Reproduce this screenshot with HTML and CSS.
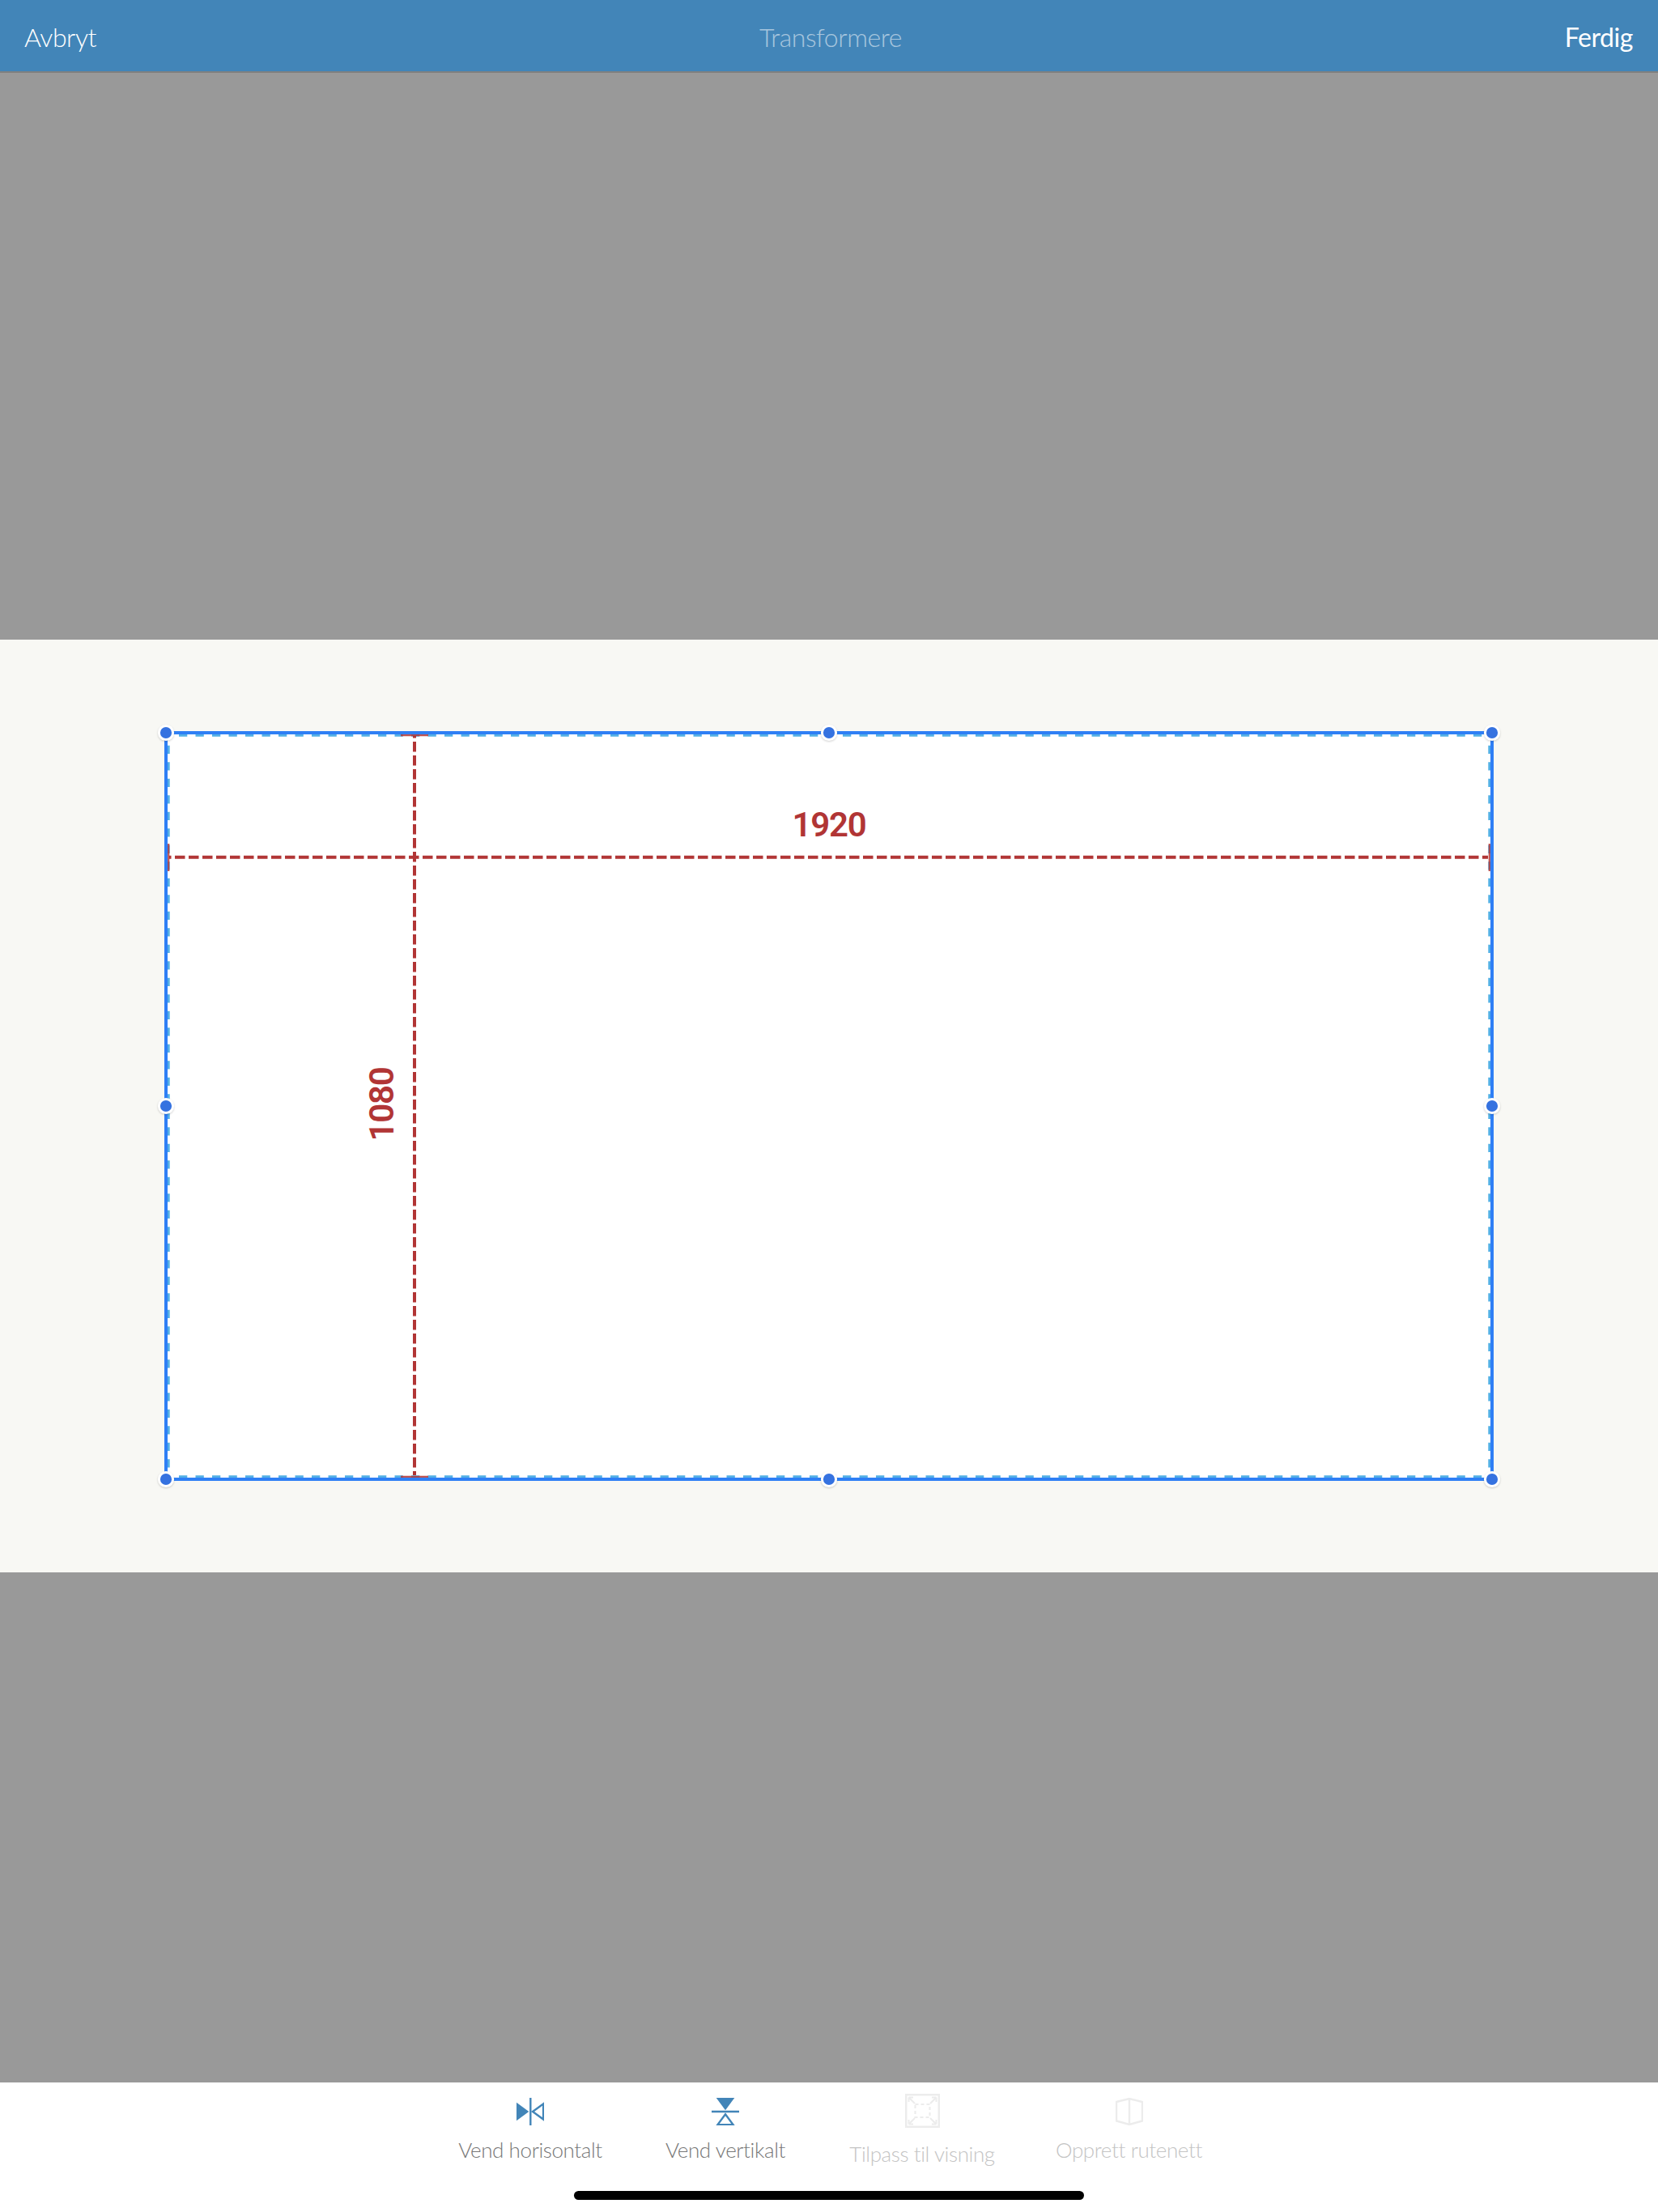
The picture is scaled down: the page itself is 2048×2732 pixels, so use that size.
FILE: index.html
```html
<!DOCTYPE html>
<html lang="no">
<head>
<meta charset="utf-8">
<title>Transformere</title>
<link rel="stylesheet" href="styles.css">
</head>
<body>
<div class="app">
  <header class="topbar">
    <span class="top-action">Avbryt</span>
    <span class="top-title">Transformere</span>
    <span class="top-action top-done">Ferdig</span>
  </header>
  <div class="backdrop backdrop-top"></div>
  <main class="stage">
    <svg class="diagram" viewBox="0 790 2048 1152" width="2048" height="1152" aria-hidden="true">
      <rect class="sheet" x="205" y="905" width="1638" height="922"/>
      <path class="inner-dash dash-h" d="M221 908.2H1838"/>
      <path class="inner-dash dash-h" d="M221 1823.8H1838"/>
      <path class="inner-dash dash-v" d="M208.2 920.7V1822"/>
      <path class="inner-dash dash-v" d="M1839.8 920.7V1822"/>
      <rect class="frame" x="205" y="905" width="1638" height="922"/>
      <path class="red-cap" d="M495 908.2H529M495 1823.8H529M208.2 1042V1076M1839.8 1042V1076"/>
      <path class="red-dash" d="M512 909V1822"/>
      <path class="red-dash" d="M209 1058.7H1838"/>
      <g class="handles">
        <circle cx="205" cy="905" r="8.6"/>
        <circle cx="1024" cy="905" r="8.6"/>
        <circle cx="1843" cy="905" r="8.6"/>
        <circle cx="205" cy="1366" r="8.6"/>
        <circle cx="1843" cy="1366" r="8.6"/>
        <circle cx="205" cy="1827" r="8.6"/>
        <circle cx="1024" cy="1827" r="8.6"/>
        <circle cx="1843" cy="1827" r="8.6"/>
      </g>
    </svg>
    <span class="dim dim-width">1920</span>
    <span class="dim dim-height">1080</span>
  </main>
  <div class="backdrop backdrop-bottom"></div>
  <footer class="toolbar">
    <div class="tools">
      <div class="tool">
        <svg class="icon" viewBox="0 0 34 34" width="34" height="34" aria-hidden="true">
          <path class="ink-fill" d="M0 5.7L15.3 17L0 28.3Z"/>
          <path class="ink-line" d="M17.3 0V34"/>
          <path class="ink-line" d="M33.1 7.5L20 17L33.1 26.5Z"/>
        </svg>
        <span class="tool-label">Vend horisontalt</span>
      </div>
      <div class="tool">
        <svg class="icon" viewBox="0 0 34 34" width="34" height="34" aria-hidden="true">
          <path class="ink-fill" d="M5.7 0H28.3L17 15.3Z"/>
          <path class="ink-line" d="M0 17H34"/>
          <path class="ink-line" d="M17 20.2L26.5 33.1H7.5Z"/>
        </svg>
        <span class="tool-label">Vend vertikalt</span>
      </div>
      <div class="tool tool-off tool-fit">
        <svg class="icon" viewBox="0 0 43 42" width="43" height="42" aria-hidden="true">
          <rect class="off-line" x="1.2" y="1.2" width="40.6" height="39.6"/>
          <rect class="off-dash" x="12.5" y="13" width="18" height="16"/>
          <path class="off-thin" d="M4.5 4.5L12 12M4.5 4.5V10M4.5 4.5H10M38.5 4.5L31 12M38.5 4.5V10M38.5 4.5H33M4.5 37.5L12 30M4.5 37.5V32M4.5 37.5H10M38.5 37.5L31 30M38.5 37.5V32M38.5 37.5H33"/>
        </svg>
        <span class="tool-label">Tilpass til visning</span>
      </div>
      <div class="tool tool-off">
        <svg class="icon" viewBox="0 0 34 34" width="34" height="34" aria-hidden="true">
          <path class="off-line" d="M1 5L17 1L33 5V28.5L17 33L1 28.5ZM17 1V33"/>
        </svg>
        <span class="tool-label">Opprett rutenett</span>
      </div>
    </div>
    <div class="home-bar"></div>
  </footer>
</div>
</body>
</html>
```
FILE: styles.css
```css
* { box-sizing: border-box; }
html, body { margin: 0; padding: 0; }
body { width: 2048px; height: 2732px; overflow: hidden; background: #fff; font-family: "Lato", "Liberation Sans", sans-serif; }
.app { display: flex; flex-direction: column; width: 2048px; height: 2732px; }

.topbar { display: flex; justify-content: space-between; align-items: center; height: 90px; padding: 3px 31px 0 30px; background: #4285b8; border-bottom: 2px solid #808080; font-size: 32px; letter-spacing: -.45px; font-weight: 300; color: #fff; }
.top-title { color: rgba(255,255,255,.55); }
.top-done { font-weight: 400; }

.backdrop { background: #999; }
.backdrop-top { height: 700px; }
.backdrop-bottom { height: 630px; }

.stage { position: relative; height: 1152px; background: #f8f8f4; }
.diagram { display: block; }
.sheet { fill: #fff; }
.frame { fill: none; stroke: #2f7ff5; stroke-width: 4; }
.inner-dash { fill: none; stroke: #52b0e6; stroke-width: 3; stroke-dasharray: 10.3 10.2; }
.red-cap { fill: none; stroke: #b13535; stroke-width: 2.2; opacity: .85; }
.red-dash { fill: none; stroke: #b13535; stroke-width: 4; stroke-dasharray: 12.5 4.5; stroke-dashoffset: 10; }
.handles circle { fill: #3572e0; stroke: #fff; stroke-width: 3; filter: drop-shadow(0 1px 1px rgba(0,0,0,.18)); }

.dim { position: absolute; font-family: "Roboto", "Liberation Sans", sans-serif; font-weight: 600; font-size: 42px; letter-spacing: -1.2px; line-height: 50px; color: #b13535; }
.dim-width { left: 924px; top: 204px; width: 200px; text-align: center; }
.dim-height { left: 372px; top: 549px; width: 200px; text-align: center; transform: rotate(-90deg); }

.toolbar { display: flex; flex-direction: column; align-items: center; height: 160px; background: #fff; }
.tools { display: grid; grid-template-columns: 178px 150px 182px 175px; column-gap: 77px; align-items: start; height: 134px; }
.tool { display: flex; flex-direction: column; align-items: center; padding-top: 19px; }
.tool-fit { padding-top: 14px; }
.icon { display: block; margin-bottom: 12px; }
.tool-fit .icon { margin-bottom: 14px; }
.tool-label { font-size: 26px; letter-spacing: -.4px; font-weight: 300; line-height: 36px; color: #777; white-space: nowrap; }
.tool-off .tool-label { color: #c4c4c4; }
.ink-fill { fill: #4285b8; }
.ink-line { fill: none; stroke: #4285b8; stroke-width: 2.4; }
.off-line { fill: none; stroke: #ececec; stroke-width: 2.4; }
.off-dash { fill: none; stroke: #ececec; stroke-width: 2; stroke-dasharray: 4 3; }
.off-thin { fill: none; stroke: #ececec; stroke-width: 2; }
.home-bar { width: 630px; height: 11px; border-radius: 6px; background: #000; }
```
